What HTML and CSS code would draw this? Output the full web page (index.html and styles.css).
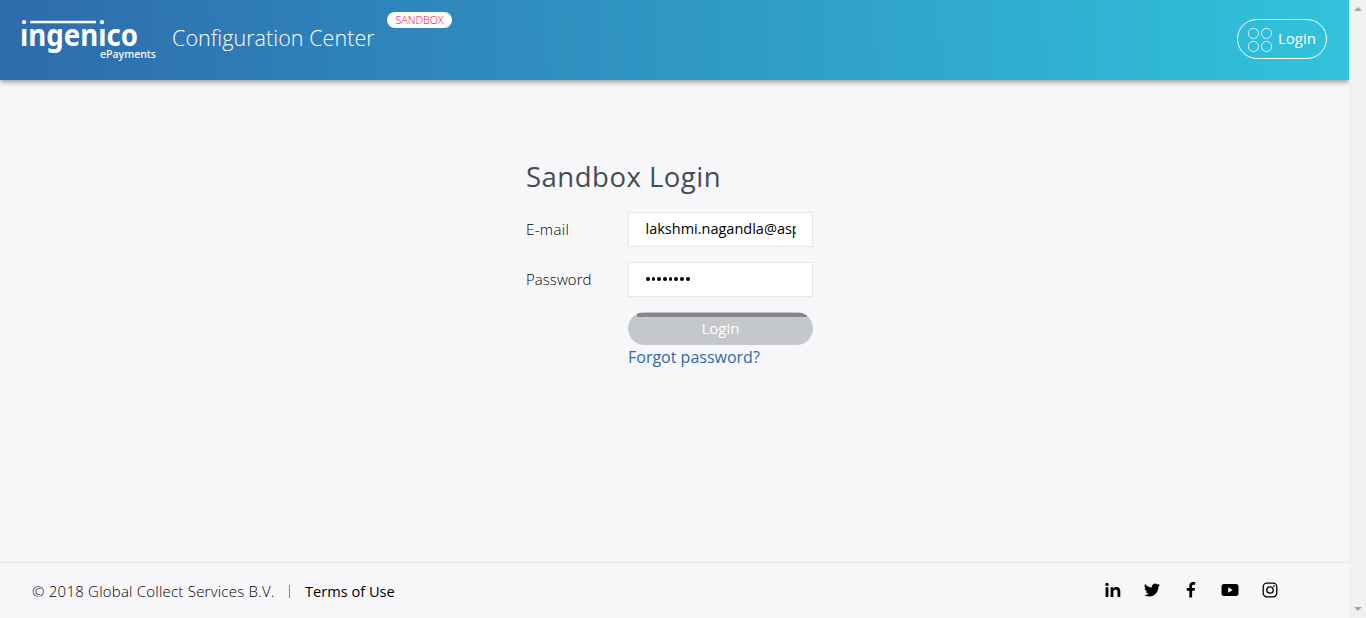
FILE: index.html
```html
<!DOCTYPE html>
<html lang="en">
<head>
<meta charset="utf-8">
<title>Configuration Center</title>
<link rel="stylesheet" href="styles.css">
</head>
<body>
<div class="page">
  <header class="header">
    <svg class="logo" width="140" height="50" viewBox="0 0 140 50" role="img" aria-label="ingenico ePayments">
      <g fill="#fff">
        <circle cx="4" cy="7.2" r="2.1"/>
        <rect x="10.300" y="5.800" width="65.700" height="2.500"/>
        <circle cx="82" cy="7.2" r="2.1"/>
        <text class="logo-name" x="0" y="30.600" textLength="118" lengthAdjust="spacingAndGlyphs">&#305;ngen&#305;co</text>
        <text class="logo-sub" x="80" y="43.400" textLength="56" lengthAdjust="spacingAndGlyphs">ePayments</text>
      </g>
    </svg>
    <span class="product">Configuration Center</span>
    <span class="env">SANDBOX</span>
    <a class="account">
      <svg width="26" height="26" viewBox="0 0 26 26" fill="none" stroke="#fff" stroke-opacity=".8" stroke-width="1">
        <circle cx="6.4" cy="7.400" r="5.100"/><circle cx="19.500" cy="7.400" r="5.100"/>
        <circle cx="6.400" cy="20.400" r="5.100"/><circle cx="19.500" cy="20.400" r="5.100"/>
      </svg>
      <span class="account-text">Login</span>
    </a>
  </header>
  <main class="main">
    <h1 class="title">Sandbox Login</h1>
    <div class="row"><span class="label label-mail">E-mail</span><div class="field"><span class="value">lakshmi.nagandla@asp</span></div></div>
    <div class="row"><span class="label">Password</span><div class="field"><span class="dots"><i></i><i></i><i></i><i></i><i></i><i></i><i></i><i></i></span></div></div>
    <button class="submit">Login</button>
    <a class="forgot">Forgot password?</a>
  </main>
  <footer class="footer">
    <span class="copy">© 2018 Global Collect Services B.V.</span>
    <span class="sep"></span>
    <a class="terms">Terms of Use</a>
    <div class="social">
      <svg width="16" height="16" viewBox="0 0 16 16"><circle cx="2" cy="2.4" r="1.7"/><path d="M.6 5.2h2.800V15H.6zM5.600 5.200h2.700v1.400C8.900 5.600 9.900 5 11.300 5 14.200 5 15.300 6.700 15.300 9.600V15h-2.800v-4.900c0-1.600-.4-2.700-1.800-2.700-1.600 0-2.300 1.100-2.300 2.700V15H5.600z"/></svg>
      <svg width="16" height="16" viewBox="0 0 24 24"><path d="M23.950 4.570a10 10 0 0 1-2.820.77 4.960 4.960 0 0 0 2.160-2.720c-.95.550-2 .960-3.130 1.180a4.920 4.920 0 0 0-8.380 4.480A13.900 13.900 0 0 1 1.640 3.160a4.900 4.900 0 0 0 1.520 6.570 4.900 4.900 0 0 1-2.230-.61v.06a4.920 4.920 0 0 0 3.950 4.830 5 5 0 0 1-2.210.08 4.940 4.940 0 0 0 4.600 3.420A9.870 9.870 0 0 1 0 19.540a14 14 0 0 0 7.550 2.210c9.050 0 14-7.500 14-13.980 0-.21 0-.42-.02-.63a9.900 9.900 0 0 0 2.420-2.570z"/></svg>
      <svg width="16" height="16" viewBox="0 0 16 16"><path d="M12.200.2v2.600h-1.600c-1.200 0-1.500.6-1.500 1.400v1.900H12l-.4 2.600H9.100V15.500H6.300V8.700H3.800V6.100h2.500V3.800C6.300 1.400 7.800.1 10 .1c1 0 1.900 0 2.200.1z"/></svg>
      <svg width="18" height="16" viewBox="0 0 18 16"><path fill-rule="evenodd" d="M3 2h12q2.500 0 2.500 3v6q0 3-2.500 3H3Q.5 14 .5 11V5Q.5 2 3 2zM7.200 5.300v5.400l4.500-2.700z"/></svg>
      <svg width="16" height="16" viewBox="0 0 16 16" fill="none" stroke="#000"><rect x="1.200" y="1.200" width="13.600" height="13.600" rx="3.700" stroke-width="1.300"/><circle cx="8" cy="8" r="3.200" stroke-width="1.300"/><circle cx="11.900" cy="4.100" r=".9" fill="#000" stroke="none"/></svg>
    </div>
  </footer>
</div>
<div class="scrollbar"><i class="up"></i><i class="down"></i></div>
</body>
</html>
```
FILE: styles.css
```css
* { box-sizing: border-box; }
body { margin: 0; height: 618px; display: flex; overflow: hidden; background: #f7f7fa; color: #000; font-family: "Open Sans", "Noto Sans", sans-serif; font-size: 15px; font-weight: 300; white-space: nowrap; }
.page { width: 1349px; height: 618px; display: flex; flex-direction: column; }
.header { height: 80px; flex: none; display: flex; align-items: flex-start; padding: 0 22px 0 20px; background: linear-gradient(88deg, #2e6bad, #31c3dc); box-shadow: 0 2px 5px rgba(0,0,0,.4); color: #fff; }
.logo { margin-top: 15px; flex: none; }
.logo-name { font: 700 31px "Noto Sans", sans-serif; }
.logo-sub { font: 500 11.500px "Noto Sans", sans-serif; }
.product { width: 202px; margin: 22px 0 0 12px; font-size: 21.5px; line-height: 32px; letter-spacing: .05px; font-weight: 330; }
.env { width: 65px; height: 16px; margin: 12px 0 0 13px; border-radius: 8px; background: #fff; color: #e4003a; font-size: 10.700px; font-weight: 350; line-height: 16px; text-align: center; }
.account { width: 90px; height: 40px; margin: 19px 0 0 auto; border: 1px solid #fff; border-radius: 20px; display: flex; align-items: center; padding-left: 9px; font-size: 15px; font-weight: 500; }
.account-text { margin: -2px 0 0 5px; }
.main { flex: 1; padding: 78px 0 0 526px; display: flex; flex-direction: column; align-items: flex-start; }
.title { margin: 0 0 16px; font-size: 27.500px; line-height: 38px; letter-spacing: .5px; font-weight: 380; color: #454b54; }
.row { display: flex; margin-bottom: 15px; height: 35px; }
.label { width: 102px; line-height: 35px; letter-spacing: .05px; }
.label-mail { letter-spacing: .35px; }
.field { width: 185px; height: 35px; padding: 0 16px 0 17px; border: 1px solid #e6e6ef; background: #fff; display: flex; align-items: center; }
.value { width: 151px; overflow: hidden; font-weight: 400; font-size: 14.500px; line-height: 31px; margin: -2px 0 0 -.5px; }
.dots { display: flex; gap: 2px; margin-top: -1px; }
.dots i { width: 3.700px; height: 4px; border-radius: 50%; background: #000; }
.submit { width: 185px; height: 33px; margin: 0 0 0 102px; padding: 0; border: 0; border-radius: 17px; overflow: hidden; background: linear-gradient(#c4c7cc 1px, transparent 1px), linear-gradient(#83868b, #83868b) 9px 0 / 170px 5px no-repeat, #c4c7cc; color: #fff; font: 500 15px/31px "Open Sans", sans-serif; }
.forgot { margin-left: 102px; line-height: 24px; font-size: 16px; font-weight: 400; color: #2e67ab; }
.footer { height: 56px; flex: none; border-top: 1px solid #e6e6ea; display: flex; align-items: center; padding: 0 71px 0 32px; }
.copy { width: 242px; letter-spacing: .22px; }
.sep { width: 1px; height: 13px; margin: 2px 15px 0; background: #888; }
.terms { font-size: 14.600px; font-weight: 400; }
.social { margin-left: auto; margin-top: -1px; display: flex; gap: 22.700px; }
.scrollbar { width: 17px; height: 618px; background: #f1f1f1; display: flex; flex-direction: column; align-items: center; justify-content: space-between; padding: 7px 0; }
.scrollbar i { border: 4px solid transparent; }
.up { border-top: 0 !important; border-bottom-color: #a3a3a3 !important; }
.down { border-bottom: 0 !important; border-top-color: #a3a3a3 !important; }
```
